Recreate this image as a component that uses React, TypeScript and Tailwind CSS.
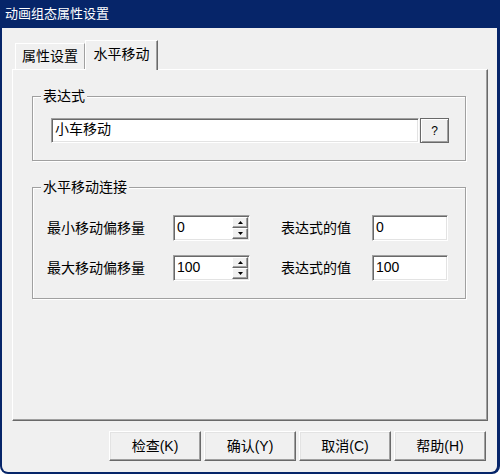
import React from "react";

function SunkenBox({ className = "", children }: { className?: string; children?: React.ReactNode }) {
  return (
    <div
      className={`bg-white border border-t-[#a0a0a0] border-l-[#a0a0a0] border-b-white border-r-white shadow-[inset_1px_1px_0_#696969,inset_-1px_-1px_0_#e3e3e3] ${className}`}
    >
      {children}
    </div>
  );
}

function SpinButton({ up }: { up: boolean }) {
  return (
    <div className="flex-1 bg-[#f0f0f0] border border-t-white border-l-white border-b-[#696969] border-r-[#696969] shadow-[inset_-1px_-1px_0_#a0a0a0] flex items-center justify-center">
      <svg width="5" height="3" viewBox="0 0 5 3">
        {up ? <path d="M2.5 0 L5 3 L0 3 Z" fill="#000" /> : <path d="M0 0 L5 0 L2.5 3 Z" fill="#000" />}
      </svg>
    </div>
  );
}

function GroupBox({ title, className = "", children }: { title: string; className?: string; children?: React.ReactNode }) {
  return (
    <div className={`relative border border-[#a0a0a0] shadow-[1px_1px_0_white,inset_1px_1px_0_white] ${className}`}>
      <span className="absolute left-[8px] top-[-9px] bg-[#f0f0f0] px-[2px] leading-[16px]">{title}</span>
      {children}
    </div>
  );
}

function Row({ label, value }: { label: string; value: string }) {
  return (
    <div className="flex items-center h-[26px] pl-[14px]">
      <div className="w-[126px]">{label}</div>
      <SunkenBox className="w-[77px] h-[26px] flex">
        <div className="flex-1 pl-[3px] leading-[22px]">{value}</div>
        <div className="w-[16px] flex flex-col mt-[1px] mb-[1px] mr-[1px] ml-[1px]">
          <SpinButton up />
          <SpinButton up={false} />
        </div>
      </SunkenBox>
      <div className="ml-[31px] w-[91px]">表达式的值</div>
      <SunkenBox className="w-[76px] h-[26px] pl-[3px] leading-[22px]">{value}</SunkenBox>
    </div>
  );
}

function DlgButton({ children }: { children: React.ReactNode }) {
  return (
    <div className="w-[92px] h-[30px] flex items-center justify-center bg-[#f0f0f0] border border-t-white border-l-white border-b-[#696969] border-r-[#696969] shadow-[inset_-1px_-1px_0_#a0a0a0,inset_1px_1px_0_#e3e3e3]">
      {children}
    </div>
  );
}

export default function App() {
  return (
    <div className="w-[500px] h-[474px] bg-white font-['Liberation_Sans','Noto_Sans_CJK_SC',sans-serif]">
      <div className="w-full h-full bg-[#062569] rounded-b-[8px] flex flex-col pl-[2px] pr-[3px] pb-[2px]">
        <div className="h-[28px] flex items-center pl-[3px] text-white text-[13px]">动画组态属性设置</div>
        <div className="flex-1 bg-[#f0f0f0] rounded-b-[6px] flex flex-col pl-[10px] pr-[9px] pt-[12px] text-[14px] text-black">
          <div className="h-[29px] flex items-end">
            <div className="ml-[3px] w-[70px] h-[26px] border-t border-l border-white border-r border-r-[#a0a0a0] flex items-center justify-center">
              属性设置
            </div>
            <div className="relative z-10 w-[73px] h-[30px] -mb-[1px] bg-[#f0f0f0] border-t border-l border-white border-r border-r-[#696969] shadow-[inset_-1px_0_0_#a0a0a0] flex items-center justify-center pb-[2px]">
              水平移动
            </div>
          </div>
          <div className="h-[352px] border border-t-white border-l-white border-r-[#696969] border-b-[#696969] shadow-[inset_-1px_-1px_0_#a0a0a0] pt-[26px] pl-[19px] pr-[21px]">
            <GroupBox title="表达式" className="h-[65px] pt-[21px] pl-[18px]">
              <div className="flex">
                <SunkenBox className="w-[368px] h-[25px] pl-[3px] leading-[21px]">小车移动</SunkenBox>
                <div className="ml-[1px] w-[29px] h-[25px] border border-[#696969] bg-[#f0f0f0] shadow-[inset_1px_1px_0_white,inset_-1px_-1px_0_#a0a0a0] flex items-center justify-center text-[12px]">
                  ?
                </div>
              </div>
            </GroupBox>
            <GroupBox title="水平移动连接" className="mt-[26px] h-[112px] pt-[27px]">
              <div className="flex flex-col gap-[14px]">
                <Row label="最小移动偏移量" value="0" />
                <Row label="最大移动偏移量" value="100" />
              </div>
            </GroupBox>
          </div>
          <div className="mt-[10px] flex justify-end gap-[3px] pr-[2px]">
            <DlgButton>检查(K)</DlgButton>
            <DlgButton>确认(Y)</DlgButton>
            <DlgButton>取消(C)</DlgButton>
            <DlgButton>帮助(H)</DlgButton>
          </div>
        </div>
      </div>
    </div>
  );
}
